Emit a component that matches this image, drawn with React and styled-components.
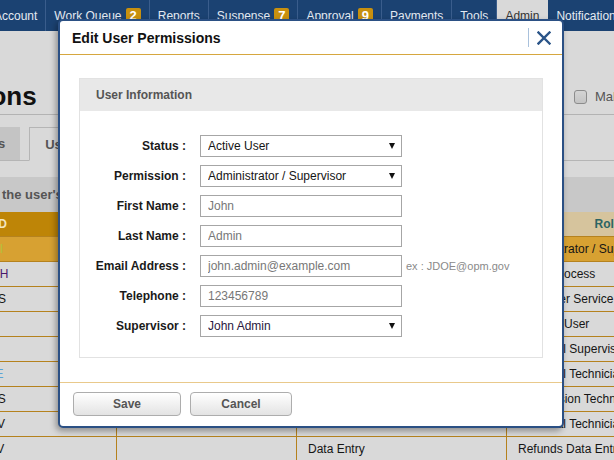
import React from "react";
import styled, { createGlobalStyle, css } from "styled-components";

const GlobalStyle = createGlobalStyle`
  html, body {
    margin: 0;
    padding: 0;
  }
  body {
    width: 614px;
    height: 460px;
    overflow: hidden;
    background: #d9d9d9;
    font-family: "Liberation Sans", Arial, sans-serif;
  }
  * {
    box-sizing: border-box;
  }
`;

const Page = styled.div`
  position: relative;
  width: 614px;
  height: 460px;
  overflow: hidden;
`;

/* ---------- top navigation ---------- */

const NavBar = styled.nav`
  display: flex;
  height: 31px;
  background: #1b4272;
  white-space: nowrap;
`;

const NavItem = styled.div`
  display: flex;
  align-items: center;
  gap: 4px;
  padding: 0 8px;
  font-size: 12px;
  color: #e4eaf2;
  border-right: 1px solid #3a5d8c;
  flex: 0 0 auto;
  &:first-child {
    margin-left: -14px;
  }
  ${(p) =>
    p.active &&
    css`
      background: #d9d9d9;
      color: #333;
      border-right-color: transparent;
    `}
`;

const Badge = styled.span`
  display: inline-block;
  height: 15px;
  line-height: 15px;
  padding: 0 4px;
  border-radius: 2px;
  background: #c8900f;
  color: #fff;
  font-weight: bold;
  font-size: 13px;
`;

/* ---------- page heading ---------- */

const TitleRow = styled.div`
  display: flex;
  height: 84px;
  border-bottom: 1px solid #b3b3b3;
  padding-bottom: 3px;
  align-items: flex-end;
`;

const Title = styled.h1`
  flex: 0 0 574px;
  margin: 0;
  font-size: 26px;
  line-height: 30px;
  font-weight: bold;
  color: #111;
  white-space: nowrap;
  overflow: hidden;
  text-indent: -183px;
`;

const ShowInactive = styled.label`
  display: flex;
  align-items: center;
  gap: 8px;
  margin-bottom: 7px;
  font-size: 13px;
  color: #555;
  white-space: nowrap;
`;

const CheckBox = styled.span`
  width: 13px;
  height: 14px;
  border: 1px solid #8c8c8c;
  border-radius: 3px;
  background: linear-gradient(#d4d4d4, #c4c4c4);
`;

/* ---------- tabs ---------- */

const TabRow = styled.div`
  display: flex;
  gap: 9px;
  margin-top: 12px;
  height: 34px;
  border-bottom: 1px solid #b5b5b5;
  white-space: nowrap;
`;

const Tab = styled.div`
  display: flex;
  align-items: center;
  padding: 0 15px;
  font-size: 13px;
  font-weight: bold;
  color: #555;
  background: #c4c4c4;
  &:first-child {
    margin-left: -56px;
  }
  ${(p) =>
    p.active &&
    css`
      background: #d9d9d9;
      border: 1px solid #b5b5b5;
      border-bottom-color: #d9d9d9;
      margin-bottom: -1px;
    `}
`;

const Instructions = styled.div`
  margin-top: 16px;
  height: 35px;
  line-height: 35px;
  background: #c8c8c8;
  font-size: 13px;
  font-weight: bold;
  color: #555;
  white-space: nowrap;
  text-indent: -40px;
`;

/* ---------- users table ---------- */

const Grid = styled.div`
  margin-left: -46px;
  width: 755px;
`;

const Row = styled.div`
  display: grid;
  grid-template-columns: 163px 180px 210px 202px;
  height: 25px;
  border-bottom: 1px solid #b5821e;
  background: ${(p) => (p.selected ? "#d7a132" : "transparent")};
`;

const HeadCell = styled.div`
  padding: 0 11px;
  line-height: 24px;
  font-size: 12px;
  font-weight: bold;
  white-space: nowrap;
  overflow: hidden;
  border-right: 1px solid #b5821e;
  text-align: ${(p) => (p.sorted ? "left" : "center")};
  background: ${(p) => (p.sorted ? "#be8507" : "#d6c49d")};
  color: ${(p) => (p.sorted ? "#f3e6c0" : "#2b6464")};
`;

const toneColor = {
  selected: "#b4c23c",
  visited: "#4b176c",
  hover: "#5aa4d6",
};

const Cell = styled.div`
  padding: 0 11px;
  line-height: 24px;
  font-size: 12px;
  white-space: nowrap;
  overflow: hidden;
  border-right: 1px solid #b5821e;
  color: ${(p) => toneColor[p.tone] || "#151515"};
`;

/* ---------- modal ---------- */

const Dialog = styled.div`
  position: absolute;
  left: 58px;
  top: 19px;
  width: 506px;
  background: #fff;
  border: 2px solid #2b5084;
  border-radius: 5px;
  box-shadow: -2px 3px 6px rgba(0, 0, 0, 0.35);
`;

const DialogHeader = styled.div`
  display: flex;
  align-items: center;
  height: 34px;
  padding: 0 11px 0 12px;
  border-bottom: 1px solid #d6a73f;
`;

const DialogTitle = styled.h2`
  flex: 1;
  margin: 0;
  font-size: 14px;
  font-weight: bold;
  color: #111;
`;

const CloseDivider = styled.span`
  width: 1px;
  height: 19px;
  background: #a9c1dc;
  margin-right: 8px;
`;

const CloseButton = styled.button`
  display: flex;
  padding: 0;
  border: 0;
  background: none;
  cursor: pointer;
`;

const DialogBody = styled.div`
  padding: 23px 19px 24px;
`;

const Panel = styled.section`
  border: 1px solid #e2e2e2;
`;

const PanelHead = styled.div`
  height: 32px;
  line-height: 32px;
  padding-left: 16px;
  background: #e8e8e8;
  font-size: 12px;
  font-weight: bold;
  color: #555;
`;

const Form = styled.div`
  display: flex;
  flex-direction: column;
  gap: 8px;
  padding: 24px 0 20px;
`;

const FormRow = styled.div`
  display: flex;
  align-items: center;
  height: 22px;
`;

const Label = styled.label`
  width: 106px;
  margin-right: 14px;
  text-align: right;
  font-size: 12px;
  font-weight: bold;
  color: #1a1a1a;
  white-space: nowrap;
`;

const fieldBase = css`
  width: 202px;
  height: 22px;
  margin: 0;
  border: 1px solid #a6a6a6;
  border-radius: 0;
  padding: 0 7px;
  font-family: "Liberation Sans", Arial, sans-serif;
  font-size: 12px;
  background: #fff;
  outline: none;
`;

const TextInput = styled.input`
  ${fieldBase};
  color: #777;
`;

const SelectWrap = styled.div`
  position: relative;
  width: 202px;
  height: 22px;
  &::after {
    content: "";
    position: absolute;
    right: 7px;
    top: 8px;
    border-left: 3.5px solid transparent;
    border-right: 3.5px solid transparent;
    border-top: 6px solid #111;
    pointer-events: none;
  }
`;

const Select = styled.select`
  ${fieldBase};
  appearance: none;
  color: ${(p) => p.$color || "#151515"};
`;

const Hint = styled.span`
  margin-left: 4px;
  font-size: 11px;
  color: #8a8a8a;
  white-space: nowrap;
`;

const DialogFooter = styled.div`
  display: flex;
  gap: 9px;
  padding: 9px 13px 10px;
  border-top: 1px solid #e9c98b;
`;

const Button = styled.button`
  width: ${(p) => p.width}px;
  height: 24px;
  border: 1px solid #adadad;
  border-radius: 4px;
  background: linear-gradient(#ffffff, #e3e3e3);
  font-family: "Liberation Sans", Arial, sans-serif;
  font-size: 12px;
  font-weight: bold;
  color: #555;
  cursor: pointer;
`;

/* ---------- data ---------- */

const navItems = [
  { label: "Account" },
  { label: "Work Queue", badge: 2 },
  { label: "Reports" },
  { label: "Suspense", badge: 7 },
  { label: "Approval", badge: 9 },
  { label: "Payments" },
  { label: "Tools" },
  { label: "Admin", active: true },
  { label: "Notifications" },
];

const columns = [
  { label: "User ID", sorted: true },
  { label: "Name" },
  { label: "Permission" },
  { label: "Role" },
];

const users = [
  { id: "SADMI", name: "John Admin", perm: "Administrator", role: "Administrator / Supervisor", tone: "selected", selected: true },
  { id: "JSMITH", name: "Jane Smith", perm: "Batch", role: "Batch Process", tone: "visited" },
  { id: "JDAVIS", name: "Joe Davis", perm: "Customer Service", role: "Customer Service" },
  { id: "BLEE", name: "Bob Lee", perm: "General", role: "General User" },
  { id: "MKIM", name: "Mary Kim", perm: "Fin Supervisor", role: "Financial Supervisor" },
  { id: "JPAGE", name: "Jim Page", perm: "Fin Tech", role: "Financial Technician", tone: "hover" },
  { id: "LROSS", name: "Lisa Ross", perm: "Suspense", role: "Suspension Technician" },
  { id: "JDOEV", name: "Adam Doe", perm: "Fin Tech", role: "Financial Technician" },
  { id: "RLEEV", name: "", perm: "Data Entry", role: "Refunds Data Entry" },
];

const fields = [
  { label: "Status :", select: true, value: "Active User" },
  { label: "Permission :", select: true, value: "Administrator / Supervisor" },
  { label: "First Name :", value: "John" },
  { label: "Last Name :", value: "Admin" },
  { label: "Email Address :", value: "john.admin@example.com", hint: "ex : JDOE@opm.gov" },
  { label: "Telephone :", value: "123456789" },
  { label: "Supervisor :", select: true, value: "John Admin", color: "#2a1840" },
];

const CloseIcon = () => (
  <svg width="14" height="14" viewBox="0 0 14 14">
    <path d="M1.5 1.5 L12.5 12.5 M12.5 1.5 L1.5 12.5" stroke="#2a5488" strokeWidth="2.4" strokeLinecap="square" fill="none" />
  </svg>
);

const App = () => {
  return (
    <Page>
      <GlobalStyle />
      <NavBar>
        {navItems.map((item) => (
          <NavItem key={item.label} active={item.active}>
            {item.label}
            {item.badge && <Badge>{item.badge}</Badge>}
          </NavItem>
        ))}
      </NavBar>

      <TitleRow>
        <Title>User Permissions</Title>
        <ShowInactive>
          <CheckBox />
          Make inactive users visible
        </ShowInactive>
      </TitleRow>

      <TabRow>
        <Tab>Groups</Tab>
        <Tab active>Users</Tab>
      </TabRow>

      <Instructions>Select the user's name to edit the permissions</Instructions>

      <Grid>
        <Row>
          {columns.map((c) => (
            <HeadCell key={c.label} sorted={c.sorted}>
              {c.label}
            </HeadCell>
          ))}
        </Row>
        {users.map((u) => (
          <Row key={u.id} selected={u.selected}>
            <Cell tone={u.tone}>{u.id}</Cell>
            <Cell>{u.name}</Cell>
            <Cell>{u.perm}</Cell>
            <Cell>{u.role}</Cell>
          </Row>
        ))}
      </Grid>

      <Dialog role="dialog">
        <DialogHeader>
          <DialogTitle>Edit User Permissions</DialogTitle>
          <CloseDivider />
          <CloseButton aria-label="Close">
            <CloseIcon />
          </CloseButton>
        </DialogHeader>

        <DialogBody>
          <Panel>
            <PanelHead>User Information</PanelHead>
            <Form>
              {fields.map((f) => (
                <FormRow key={f.label}>
                  <Label>{f.label}</Label>
                  {f.select ? (
                    <SelectWrap>
                      <Select defaultValue={f.value} $color={f.color}>
                        <option>{f.value}</option>
                      </Select>
                    </SelectWrap>
                  ) : (
                    <TextInput defaultValue={f.value} />
                  )}
                  {f.hint && <Hint>{f.hint}</Hint>}
                </FormRow>
              ))}
            </Form>
          </Panel>
        </DialogBody>

        <DialogFooter>
          <Button width={108}>Save</Button>
          <Button width={102}>Cancel</Button>
        </DialogFooter>
      </Dialog>
    </Page>
  );
};

export default App;
